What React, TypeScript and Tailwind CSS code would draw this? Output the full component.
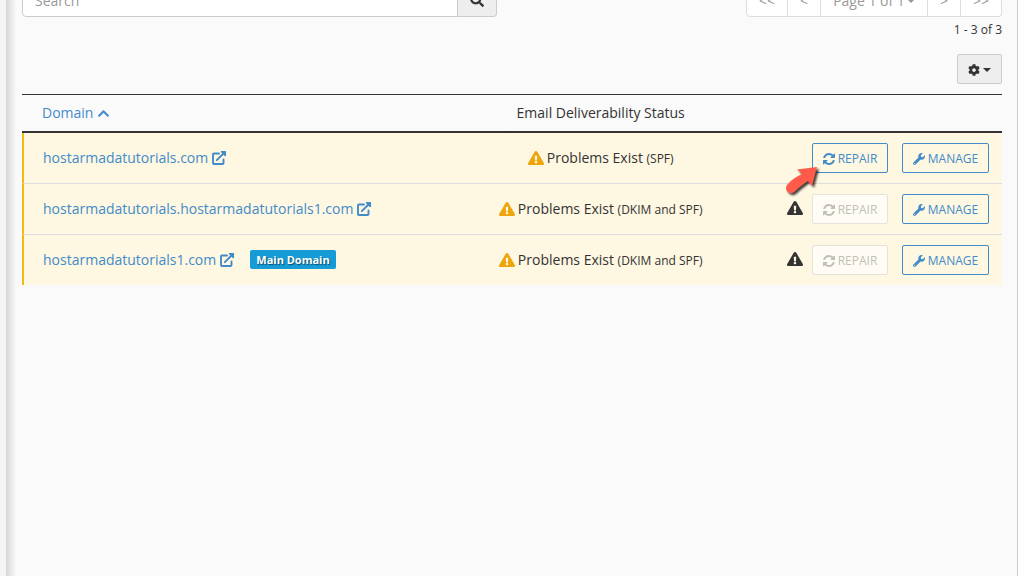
import { FaChevronUp, FaCog, FaExclamationTriangle, FaSearch, FaWrench } from "react-icons/fa";

type DomainRow = {
  name: string;
  problems: string;
  isMain?: boolean;
  canRepair?: boolean;
};

const domains: DomainRow[] = [
  { name: "hostarmadatutorials.com", problems: "SPF", canRepair: true },
  { name: "hostarmadatutorials.hostarmadatutorials1.com", problems: "DKIM and SPF" },
  { name: "hostarmadatutorials1.com", problems: "DKIM and SPF", isMain: true },
];

const pageButton = "h-full border-y border-r border-[#ddd] bg-white pt-px text-[#999]";

function Caret() {
  return <span className="border-x-4 border-t-4 border-x-transparent border-t-current" />;
}

function ExternalLinkIcon() {
  return (
    <svg aria-hidden="true" viewBox="0 0 14 14" fill="none" className="size-3.5">
      <path
        d="M7 2.5H2A1 1 0 0 0 1 3.5V12A1 1 0 0 0 2 13H10.5A1 1 0 0 0 11.5 12V8.5M4.8 9.2L11.5 2.5"
        stroke="currentColor"
        strokeWidth="1.9"
        strokeLinecap="round"
      />
      <path d="M9 0H13.4A.6 .6 0 0 1 14 .6V5L12.9 5.2L8.8 1.1Z" fill="currentColor" />
    </svg>
  );
}

function RefreshIcon() {
  return (
    <svg aria-hidden="true" viewBox="0 0 1536 1536" fill="currentColor" className="size-3">
      <path d="M1511 928q0 5-1 7-64 268-268 434.5T764 1536q-146 0-282.5-55T238 1324l-129 129q-19 19-45 19t-45-19-19-45V960q0-26 19-45t45-19h448q26 0 45 19t19 45-19 45l-137 137q71 66 161 102t187 36q134 0 250-65t186-179q11-17 53-117 8-23 30-23h192q13 0 22.5 9.5t9.5 22.5zM1536 128v448q0 26-19 45t-45 19h-448q-26 0-45-19t-19-45 19-45l138-138Q969 256 768 256q-134 0-250 65T332 500q-11 17-53 117-8 23-30 23H50q-13 0-22.5-9.5T18 608v-7q65-268 270-434.5T768 0q146 0 284 55.5T1297 212l130-129q19-19 45-19t45 19 19 45z" />
    </svg>
  );
}

function Toolbar() {
  return (
    <div className="-mt-[17px] flex h-[34px] items-stretch justify-between">
      <form className="flex w-[475px]">
        <input
          type="text"
          aria-label="Search"
          placeholder="Search"
          className="min-w-0 flex-1 rounded-l border border-[#ccc] bg-white px-3 pt-0.5 text-sm placeholder:text-[#999]"
        />
        <button
          type="button"
          aria-label="Run search"
          className="flex w-[39px] items-center justify-center rounded-r border border-l-0 border-[#ccc] bg-[#eee]"
        >
          <FaSearch className="size-3.5" />
        </button>
      </form>

      <nav aria-label="Pagination" className="flex">
        <button type="button" className={`${pageButton} w-[42px] rounded-l border-l`}>&lt;&lt;</button>
        <button type="button" className={`${pageButton} w-[33px]`}>&lt;</button>
        <button type="button" className={`${pageButton} flex w-[107px] items-center justify-center gap-0.5`}>
          Page 1 of 1
          <Caret />
        </button>
        <button type="button" className={`${pageButton} w-[33px]`}>&gt;</button>
        <button type="button" className={`${pageButton} w-[41px] rounded-r`}>&gt;&gt;</button>
      </nav>
    </div>
  );
}

function Pointer() {
  return (
    <svg
      aria-hidden="true"
      viewBox="0 0 38 34"
      className="pointer-events-none absolute top-[22px] -left-7 h-[34px] w-[38px] drop-shadow-[2px_2px_1px_rgba(0,0,0,0.75)]"
    >
      <path
        d="M33 2 L13 4.5 L18 9 C12 12 7 15 3 20 C1 23 2 27 6 28 C9 29 11 26 14 23.5 C18 20 21 18 24 16 L28 21 Z"
        fill="#ff5a4a"
      />
    </svg>
  );
}

function Actions({ row }: { row: DomainRow }) {
  return (
    <div className="flex items-center justify-end">
      {!row.canRepair && <FaExclamationTriangle className="mr-[9px] mb-0.5 size-4 text-[#333]" />}
      <div className="relative">
        <button
          type="button"
          disabled={!row.canRepair}
          className="flex h-[30px] w-[76px] items-center justify-center gap-[3px] rounded-xs border border-[#428bca] pt-0.5 text-xs text-[#428bca] uppercase disabled:border-[#e5e3d8] disabled:bg-white/65 disabled:text-[#c1c0b6]"
        >
          <RefreshIcon />
          Repair
        </button>
        {row.canRepair && <Pointer />}
      </div>
      <button
        type="button"
        className="ml-3.5 flex h-[30px] w-[87px] items-center justify-center gap-[3px] rounded-xs border border-[#428bca] pt-0.5 text-xs text-[#428bca] uppercase"
      >
        <FaWrench className="size-3" />
        Manage
      </button>
    </div>
  );
}

function DomainTable() {
  return (
    <table className="mt-2.5 w-full table-fixed border-separate border-spacing-0">
      <thead>
        <tr className="h-[39px]">
          <th className="w-[44%] border-t border-b-2 border-[#333] pl-5 text-left font-normal">
            <a href="#sort" className="flex items-center gap-1 text-[#428bca]">
              Domain
              <FaChevronUp className="size-[13px]" />
            </a>
          </th>
          <th className="w-[30%] border-t border-b-2 border-[#333] pl-px font-normal">
            Email Deliverability Status
          </th>
          <th aria-label="Actions" className="border-t border-b-2 border-[#333]" />
        </tr>
      </thead>
      <tbody className="[&_td]:border-b [&_td]:border-b-[#ddd] [&_td]:bg-[#fef7e1] [&_td]:py-2.5 [&_tr:last-child_td]:border-b-0">
        {domains.map((row) => (
          <tr key={row.name}>
            <td className="border-l-2 border-l-[#f0bb14] pl-[19px]">
              <div className="flex items-center">
                <a href="#domain" className="flex items-center gap-1 text-[#428bca]">
                  {row.name}
                  <ExternalLinkIcon />
                </a>
                {row.isMain && (
                  <span className="mb-px ml-4 rounded-xs bg-[#179bd7] px-1.5 text-[11px] leading-[19px] font-bold text-white [text-shadow:1px_1px_1px_rgba(0,0,0,0.5)]">
                    Main Domain
                  </span>
                )}
              </div>
            </td>
            <td className="pl-px">
              <div className="flex items-center justify-center gap-[3px]">
                <FaExclamationTriangle className="size-4 text-[#eda50c]" />
                <span>
                  Problems Exist <span className="text-xs">({row.problems})</span>
                </span>
              </div>
            </td>
            <td className="pr-[13px]">
              <Actions row={row} />
            </td>
          </tr>
        ))}
      </tbody>
    </table>
  );
}

export default function App() {
  return (
    <div className="flex min-h-screen overflow-hidden bg-[#f4f4f4] font-['Open_Sans',sans-serif] text-sm text-[#333]">
      <div className="w-1.5 shrink-0" />
      <div className="flex min-w-0 flex-1 bg-linear-to-r from-[#d6d6d6] to-[#fafafa] to-[10px]">
        <main className="min-w-0 flex-1 border-r border-[#ccc] pr-[15px] pl-4">
          <Toolbar />
          <p className="mt-1 text-right text-xs leading-[18px]">1 - 3 of 3</p>
          <div className="mt-[15px] flex justify-end">
            <button
              type="button"
              aria-label="Table settings"
              className="flex h-[30px] w-[45px] items-center justify-center gap-[3px] rounded-xs border border-[#ccc] bg-[#eee] pt-0.5"
            >
              <FaCog className="size-3" />
              <Caret />
            </button>
          </div>
          <DomainTable />
        </main>
        <div className="w-1.5 shrink-0 bg-[#fdfdfd]" />
      </div>
    </div>
  );
}
